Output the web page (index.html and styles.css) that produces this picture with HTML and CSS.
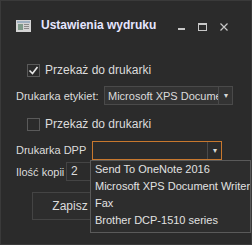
FILE: index.html
```html
<!DOCTYPE html>
<html>
<head>
  <title>Ustawienia wydruku</title>
  <link rel="stylesheet" href="styles.css">
</head>
<body>
  <div class="window">
    <div class="titlebar">
      <svg class="app-icon" width="15" height="12" viewBox="0 0 15 12">
        <rect x="0" y="0" width="15" height="12" fill="#d4d4d4"/>
        <rect x="1" y="1" width="13" height="2" fill="#9fb0c0"/>
        <rect x="2" y="4" width="5" height="6" fill="#7f9a8a"/>
        <rect x="8" y="4" width="5" height="1" fill="#8a8a8a"/>
        <rect x="8" y="6" width="5" height="1" fill="#8a8a8a"/>
        <rect x="8" y="8" width="5" height="1" fill="#8a8a8a"/>
      </svg>
      <span class="title">Ustawienia wydruku</span>
      <div class="controls">
        <svg width="7" height="8" viewBox="0 0 7 8"><rect x="0" y="5" width="7" height="2" fill="#c8c8c8"/></svg>
        <svg width="9" height="8" viewBox="0 0 9 8"><rect x="0.5" y="0.5" width="8" height="7" fill="none" stroke="#c8c8c8"/><rect x="0" y="0" width="9" height="2" fill="#c8c8c8"/></svg>
        <svg width="8" height="8" viewBox="0 0 8 8"><path d="M0.5 0.5 L7.5 7.5 M7.5 0.5 L0.5 7.5" stroke="#c8c8c8" stroke-width="1.2"/></svg>
      </div>
    </div>

    <div class="content">
      <div class="row row-check1">
        <span class="checkbox checked">
          <svg width="11" height="11" viewBox="0 0 11 11"><path d="M1.5 5.5 L4.5 8.5 L9.5 2" fill="none" stroke="#e8e8e8" stroke-width="1.6"/></svg>
        </span>
        <span class="check-label">Przekaż do drukarki</span>
      </div>

      <div class="row row-etykiet">
        <span class="label label-etykiet">Drukarka etykiet:</span>
        <div class="combo combo-etykiet">
          <span class="combo-text">Microsoft XPS Document Writer</span>
          <span class="combo-btn">&#9662;</span>
        </div>
      </div>

      <div class="row row-check2">
        <span class="checkbox"></span>
        <span class="check-label">Przekaż do drukarki</span>
      </div>

      <div class="row row-dpp">
        <span class="label label-dpp">Drukarka DPP</span>
        <div class="combo combo-dpp">
          <span class="combo-text"></span>
          <span class="combo-btn">&#9662;</span>
        </div>
      </div>

      <div class="row row-kopii">
        <span class="label label-kopii">Ilość kopii</span>
        <div class="textbox">2</div>
      </div>

      <div class="row row-save">
        <button class="save-button">Zapisz</button>
      </div>

      <ul class="dropdown">
        <li>Send To OneNote 2016</li>
        <li>Microsoft XPS Document Writer</li>
        <li>Fax</li>
        <li>Brother DCP-1510 series</li>
      </ul>
    </div>
  </div>
</body>
</html>
```

FILE: styles.css
```css
/* dark dialog */
body {
  margin: 0;
  background-color: #2b2b2b;
  font-family: "Liberation Sans", Arial, sans-serif;
  font-size: 11px;
  color: #dcdcdc;
}

.window {
  width: 252px;
  height: 245px;
  box-sizing: border-box;
  border: 1px solid #3a3a3a;
  background-color: #2b2b2b;
  overflow: hidden;
}

.titlebar {
  height: 48px;
  display: flex;
  align-items: center;
  padding-left: 15px;
}

.app-icon {
  margin-top: 1px;
}

.title {
  margin-left: 10px;
  font-weight: bold;
  font-size: 12px;
  color: #e6e6ff;
}

.controls {
  margin-left: auto;
  margin-right: 23px;
  display: flex;
  align-items: center;
  gap: 13px;
  margin-top: 4px;
}

.content {
  position: relative;
  padding-left: 15px;
}

.row {
  display: flex;
  align-items: center;
}

.row-check1 {
  margin-top: 13px;
  height: 16px;
  padding-left: 11px;
}

.row-etykiet {
  margin-top: 8px;
  height: 19px;
}

.row-check2 {
  margin-top: 12px;
  height: 14px;
  padding-left: 11px;
}

.row-dpp {
  margin-top: 10px;
  height: 18px;
}

.row-kopii {
  margin-top: 3px;
  height: 19px;
}

.row-save {
  margin-top: 11px;
  height: 28px;
  padding-left: 16px;
}

.checkbox {
  width: 13px;
  height: 13px;
  box-sizing: border-box;
  border: 1px solid #5a5a5a;
  display: flex;
  align-items: center;
  justify-content: center;
  margin-right: 5px;
}

.check-label {
  font-size: 12px;
  white-space: nowrap;
}

.label {
  white-space: nowrap;
}

.label-etykiet {
  width: 88px;
}

.label-dpp {
  width: 76px;
}

.label-kopii {
  width: 50px;
}

.combo {
  height: 19px;
  box-sizing: border-box;
  display: flex;
  align-items: center;
  overflow: hidden;
}

.combo-etykiet {
  width: 129px;
  border: 1px solid #4a4a4a;
  background-color: #333333;
}

.combo-dpp {
  width: 130px;
  border: 1px solid #c8782e;
  background-color: #2b2b2b;
}

.combo-text {
  flex: 1;
  overflow: hidden;
  white-space: nowrap;
  padding-left: 3px;
}

.combo-btn {
  width: 13px;
  height: 100%;
  border-left: 1px solid #4a4a4a;
  display: flex;
  align-items: center;
  justify-content: center;
  font-size: 8px;
  color: #d8d8d8;
}

.textbox {
  width: 26px;
  height: 19px;
  box-sizing: border-box;
  border: 1px solid #444444;
  padding-left: 4px;
  line-height: 17px;
  font-size: 12px;
}

.save-button {
  display: block;
  width: 76px;
  height: 28px;
  border: 1px solid #444444;
  background-color: #2d2d2d;
  color: #dcdcdc;
  font-family: "Liberation Sans", Arial, sans-serif;
  font-size: 12px;
  text-align: center;
  padding: 0;
}

/* open dropdown list of the DPP combo */
.dropdown {
  position: absolute;
  left: 89px;
  top: 98px;
  width: 161px;
  height: 73px;
  box-sizing: border-box;
  margin: 0;
  padding: 0 0 0 4px;
  list-style: none;
  border: 1px solid #5a5a5a;
  background-color: #2d2d2d;
  color: #e2e2e2;
  font-size: 11px;
}

.dropdown li {
  height: 17px;
  line-height: 17px;
  white-space: nowrap;
  overflow: hidden;
}
```
